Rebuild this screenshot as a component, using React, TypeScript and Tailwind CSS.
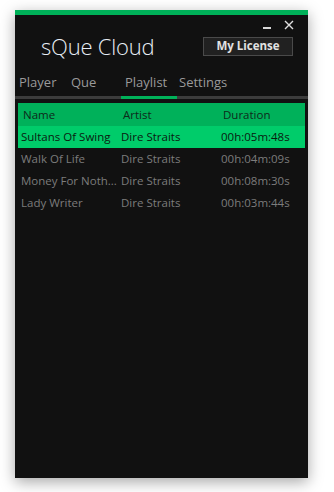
import React from 'react';

const tracks = [
  { name: 'Sultans Of Swing', artist: 'Dire Straits', duration: '00h:05m:48s' },
  { name: 'Walk Of Life', artist: 'Dire Straits', duration: '00h:04m:09s' },
  { name: 'Money For Noth...', artist: 'Dire Straits', duration: '00h:08m:30s' },
  { name: 'Lady Writer', artist: 'Dire Straits', duration: '00h:03m:44s' },
];

const tabs = [
  { label: 'Player', w: 'w-[52px]' },
  { label: 'Que', w: 'w-[54px]' },
  { label: 'Playlist', w: 'w-[54px]' },
  { label: 'Settings', w: 'w-[70px]' },
];

export default function App() {
  return (
    <div
      className="min-h-[492px] bg-white pt-[10px] pl-[15px]"
      style={{ fontFamily: '"Open Sans", "Noto Sans", sans-serif' }}
    >
      <div className="w-[293px] h-[468px] bg-[#111111] shadow-[0_4px_14px_rgba(0,0,0,0.35)] flex flex-col">
        {/* Top accent */}
        <div className="h-[5px] bg-[#00b159]" />

        {/* Window controls */}
        <div className="flex justify-end items-end h-[15px] pr-[14px] gap-[13px]">
          <div className="w-[8px] h-[2px] bg-[#d8d8d8] mb-[1px]" />
          <svg width="10" height="10" viewBox="0 0 10 10">
            <path d="M1 1 L9 9 M9 1 L1 9" stroke="#e0e0e0" strokeWidth="1.4" />
          </svg>
        </div>

        {/* Title row */}
        <div className="flex items-center mt-[6px] h-[20px]">
          <div className="ml-[26px] text-[22px] font-light text-[#e8eef6] leading-none tracking-[-0.2px]">
            sQue Cloud
          </div>
          <button className="ml-auto mr-[15px] w-[90px] h-[19px] border border-[#4a4a4a] bg-[#212121] text-[11.5px] font-bold text-[#e2e2e2] leading-none">
            My License
          </button>
        </div>

        {/* Tabs */}
        <div className="flex mt-[16px] pl-[4px] h-[20px] items-center">
          {tabs.map((t) => (
            <div key={t.label} className={`${t.w} text-[13px] text-[#9a9a9a] leading-none`}>
              {t.label}
            </div>
          ))}
        </div>
        <div className="mt-[4px] h-[3px] bg-[#3c3c3c] flex">
          <div className="ml-[106px] w-[56px] bg-[#00b159]" />
        </div>

        {/* Table */}
        <div className="mt-[4px] mx-[3px] text-[11.5px]">
          <div className="grid grid-cols-[100px_100px_1fr] h-[23px] items-center bg-[#00b15a] text-[#0e2a1a] pl-[5px]">
            <div>Name</div>
            <div>Artist</div>
            <div>Duration</div>
          </div>
          {tracks.map((t, i) => (
            <div
              key={t.name}
              className={`grid grid-cols-[100px_100px_1fr] h-[22px] items-center pl-[3px] ${
                i === 0 ? 'bg-[#00cc6a] text-[#0a1a10]' : 'text-[#7c7c7c]'
              }`}
            >
              <div className="whitespace-nowrap">{t.name}</div>
              <div>{t.artist}</div>
              <div>{t.duration}</div>
            </div>
          ))}
        </div>
      </div>
    </div>
  );
}
